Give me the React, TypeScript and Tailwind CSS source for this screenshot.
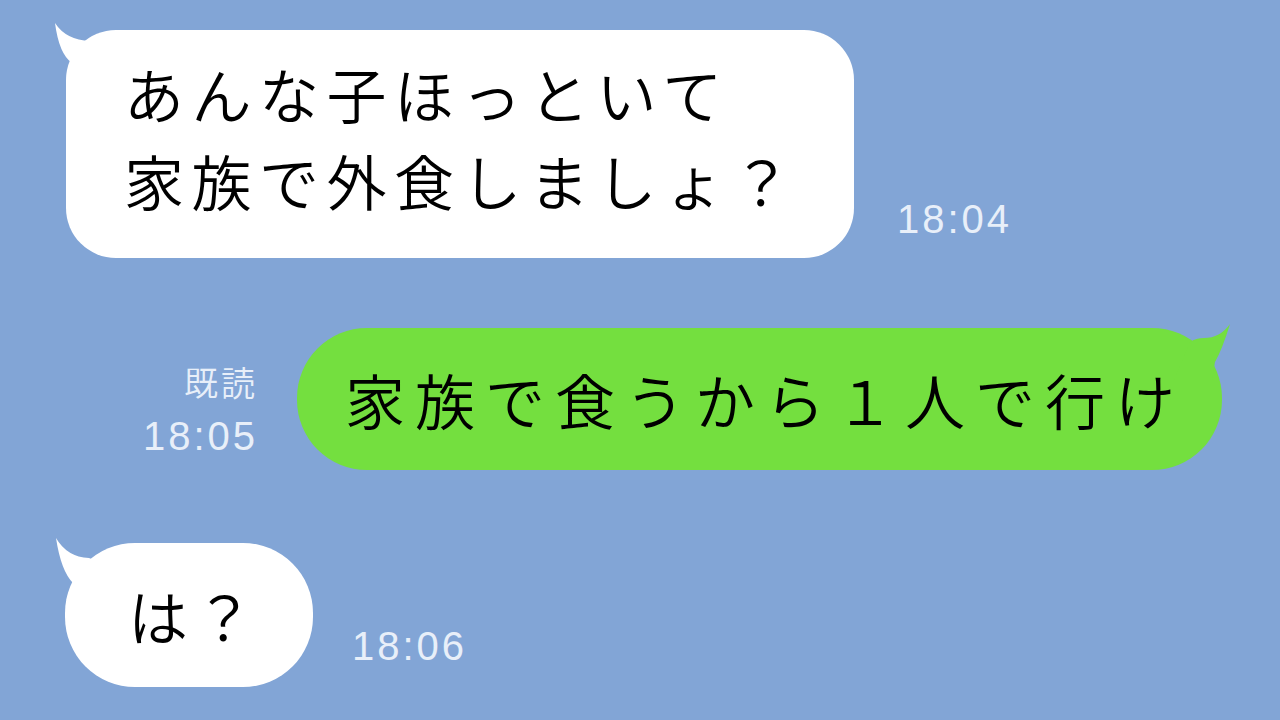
import React from "react";

function Tail({ side, color, d }: { side: "left" | "right"; color: string; d: string }) {
  const pos =
    side === "left"
      ? "left-[-12px] top-[-8px]"
      : "right-[-12px] top-[-8px] -scale-x-100";
  return (
    <svg
      className={`pointer-events-none absolute ${pos}`}
      width="60"
      height="60"
      viewBox="0 0 60 60"
      aria-hidden
    >
      <path d={d} fill={color} />
    </svg>
  );
}

function Time({ children, className = "" }: { children: React.ReactNode; className?: string }) {
  return (
    <span
      className={`font-['Liberation_Sans','Noto_Sans_CJK_JP',sans-serif] text-[40px] font-normal leading-none tracking-[3px] text-[#e8eff9] ${className}`}
    >
      {children}
    </span>
  );
}

export default function App() {
  return (
    <div className="h-[720px] w-[1280px] overflow-hidden bg-[#82a5d6] font-['Noto_Sans_CJK_JP',sans-serif] font-[350] text-black">
      {/* 相手 */}
      <div className="flex items-end gap-[43px] pl-[66px] pt-[30px]">
        <div className="relative h-[228px] w-[788px] rounded-[50px] bg-white pl-[58px] pt-[19px]">
          <Tail side="left" color="#ffffff" d="M1 1 Q12 18 36 19 L55 55 L18 55 L18 41 Q5 32 1 1 Z" />
          <p className="relative text-[60px] leading-[87px] tracking-[7.5px]">
            あんな子ほっといて
            <br />
            家族で外食しましょ？
          </p>
        </div>
        <Time className="mb-[19px]">18:04</Time>
      </div>

      {/* 自分 */}
      <div className="mt-[70px] flex items-end justify-end gap-[39px] pr-[58px]">
        <div className="mb-[14px] flex flex-col items-end gap-[17px]">
          <span className="text-[34px] leading-none tracking-[3px] text-[#e8eff9]">既読</span>
          <Time>18:05</Time>
        </div>
        <div className="relative flex h-[142px] w-[925px] items-center rounded-[70px] bg-[#74df3f] pl-[48px]">
          <Tail
            side="right"
            color="#74df3f"
            d="M4 4 Q14 18 30 18 Q38 18 44 22 L60 60 L22 60 L19 42 Q12 30 4 4 Z"
          />
          <p className="relative text-[60px] leading-none tracking-[10px]">
            家族で食うから１人で行け
          </p>
        </div>
      </div>

      {/* 相手 */}
      <div className="mt-[73px] flex items-end gap-[39px] pl-[65px]">
        <div className="relative flex h-[144px] w-[248px] items-center rounded-[70px] bg-white pl-[63px]">
          <Tail
            side="left"
            color="#ffffff"
            d="M3 3 Q14 22 36 23 Q40 24 42 28 L60 60 L24 60 L20 48 Q8 36 3 3 Z"
          />
          <p className="relative text-[60px] leading-none tracking-[6px]">は？</p>
        </div>
        <Time className="mb-[21px]">18:06</Time>
      </div>
    </div>
  );
}
